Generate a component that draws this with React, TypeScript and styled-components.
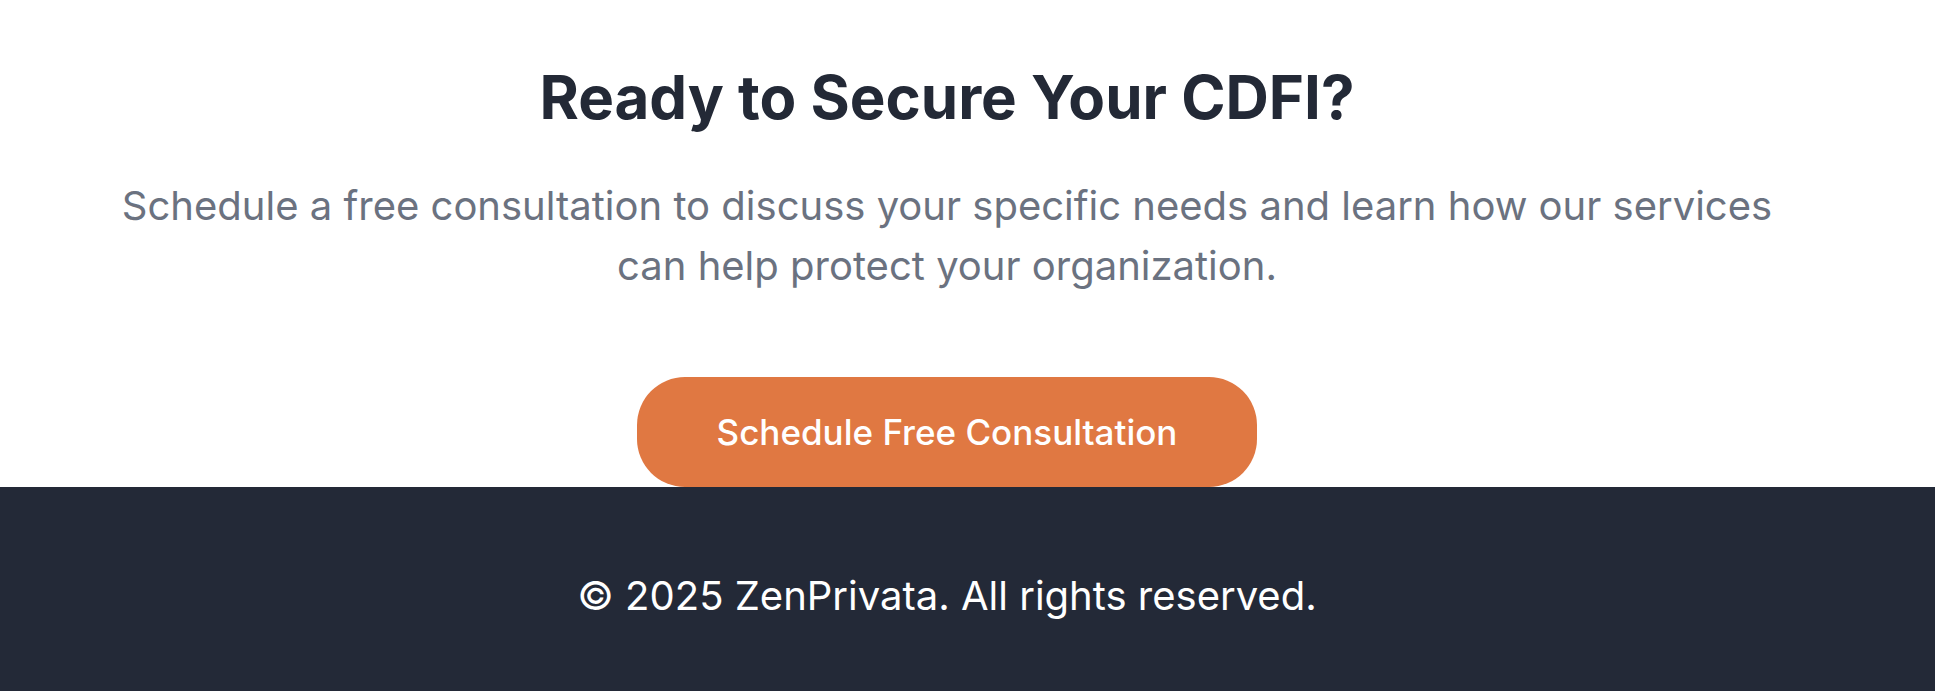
import React from "react";
import styled, { createGlobalStyle } from "styled-components";

const GlobalStyle = createGlobalStyle`
  html, body {
    margin: 0;
    padding: 0;
    background: #ffffff;
  }
  body {
    font-family: Inter, "Noto Sans", "Liberation Sans", sans-serif;
    -webkit-font-smoothing: antialiased;
  }
  * { box-sizing: border-box; }
`;

const Page = styled.div`
  display: flex;
  flex-direction: column;
  min-height: 691px;
`;

const CtaSection = styled.section`
  display: flex;
  flex-direction: column;
  align-items: center;
  padding: 61px 41px 0 0;
  text-align: center;
`;

const Heading = styled.h2`
  margin: 0;
  font-size: 60px;
  line-height: 72px;
  font-weight: 700;
  color: #232936;
`;

const Lead = styled.p`
  margin: 43px 0 0;
  max-width: 1700px;
  font-size: 40px;
  line-height: 60px;
  font-weight: 400;
  color: #6b7280;
`;

const CtaButton = styled.a`
  display: inline-flex;
  align-items: center;
  justify-content: center;
  margin-top: 81px;
  width: 620px;
  height: 110px;
  border-radius: 48px;
  background: #e07842;
  color: #ffffff;
  font-size: 35px;
  font-weight: 500;
  text-decoration: none;
  cursor: pointer;
`;

const Footer = styled.footer`
  flex: 1;
  display: flex;
  justify-content: center;
  align-items: flex-start;
  background: #232937;
  padding: 79px 41px 0 0;
`;

const FooterText = styled.p`
  margin: 0;
  font-size: 40px;
  line-height: 60px;
  color: #ffffff;
`;

export default function App() {
  return (
    <>
      <GlobalStyle />
      <Page>
        <CtaSection>
          <Heading>Ready to Secure Your CDFI?</Heading>
          <Lead>
            Schedule a free consultation to discuss your specific needs and learn how our services
            can help protect your organization.
          </Lead>
          <CtaButton href="#">Schedule Free Consultation</CtaButton>
        </CtaSection>
        <Footer>
          <FooterText>© 2025 ZenPrivata. All rights reserved.</FooterText>
        </Footer>
      </Page>
    </>
  );
}
